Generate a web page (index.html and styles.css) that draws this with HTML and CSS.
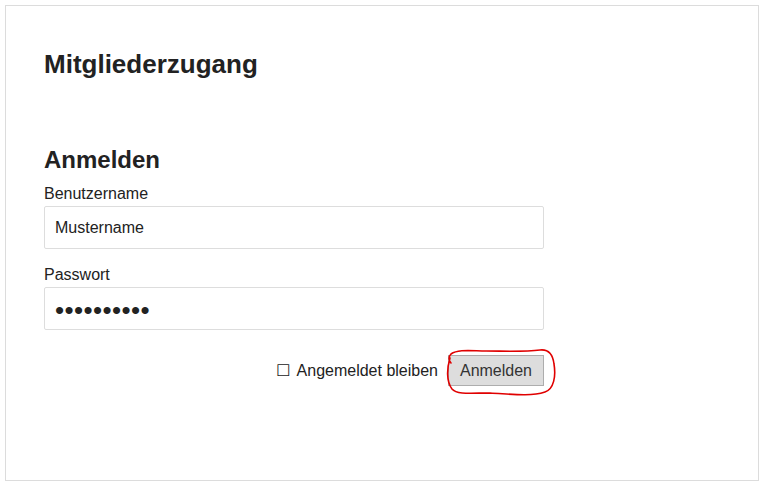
FILE: index.html
```html
<!DOCTYPE html>
<html lang="de">
<head>
<meta charset="utf-8">
<title>Mitgliederzugang</title>
<link rel="stylesheet" href="styles.css">
</head>
<body>
<div class="card">
  <h1 class="title">Mitgliederzugang</h1>
  <form class="login">
    <h2 class="subtitle">Anmelden</h2>
    <label class="field-label" for="user">Benutzername</label>
    <input class="field" id="user" type="text" value="Mustername">
    <label class="field-label" for="pass">Passwort</label>
    <input class="field pass" id="pass" type="password" value="abcdefghij">
    <div class="actions">
      <label class="remember"><span class="box">☐</span> Angemeldet bleiben</label>
      <span class="btn-wrap">
        <button type="button" class="btn">Anmelden</button>
        <svg class="scribble" viewBox="0 0 116 52" width="116" height="52">
          <path d="M6 12 C3 22 2 35 8 43 C13 49 28 47 46 47 C66 48 86 51 101 46 C110 43 112 30 110 18 C109 9 105 3 96 4 C80 6 60 5 42 5 C28 5 14 3 7 8 C4 11 5 15 7 17" fill="none" stroke="#e00000" stroke-width="1.6" stroke-linecap="round"/>
        </svg>
      </span>
    </div>
  </form>
</div>
</body>
</html>
```

FILE: styles.css
```css
html, body {
  margin: 0;
  padding: 0;
  background: #fff;
}
body {
  padding: 5px 0 0 5px;
  font-family: "Liberation Sans", Arial, sans-serif;
  color: #222;
}
.card {
  width: 676px;
  height: 474px;
  border: 1px solid #dcdcdc;
  padding: 0 38px;
}
.title {
  margin: 0;
  padding-top: 43px;
  font-size: 26px;
  line-height: 30px;
  font-weight: bold;
  color: #222;
}
.login {
  width: 500px;
  display: flex;
  flex-direction: column;
  margin-top: 67px;
}
.subtitle {
  margin: 0;
  font-size: 24px;
  line-height: 28px;
  font-weight: bold;
  color: #222;
}
.field-label {
  font-size: 16px;
  line-height: 18px;
  margin-top: 11px;
  color: #222;
}
.field {
  margin-top: 3px;
  height: 43px;
  box-sizing: border-box;
  border: 1px solid #dddddd;
  border-radius: 2px;
  padding: 0 10px;
  font-family: "Liberation Sans", Arial, sans-serif;
  font-size: 16px;
  color: #222;
  outline: none;
}
.field + .field-label {
  margin-top: 17px;
}
.pass {
  font-size: 26px;
  letter-spacing: 0.4px;
  padding-top: 4px;
  color: #222;
}
.actions {
  display: flex;
  justify-content: flex-end;
  align-items: center;
  gap: 10px;
  margin-top: 25px;
}
.remember {
  font-size: 16px;
  color: #222;
  display: flex;
  align-items: center;
  gap: 6px;
}
.box {
  font-size: 16px;
  font-family: "DejaVu Sans", sans-serif;
}
.btn-wrap {
  position: relative;
  display: inline-block;
}
.btn {
  display: block;
  width: 96px;
  height: 31px;
  background: #dddddd;
  border: 1px solid #adadad;
  border-radius: 0;
  font-family: "Liberation Sans", Arial, sans-serif;
  font-size: 16px;
  color: #333;
  padding: 0;
}
.scribble {
  position: absolute;
  left: -4px;
  top: -9px;
  pointer-events: none;
}
```
